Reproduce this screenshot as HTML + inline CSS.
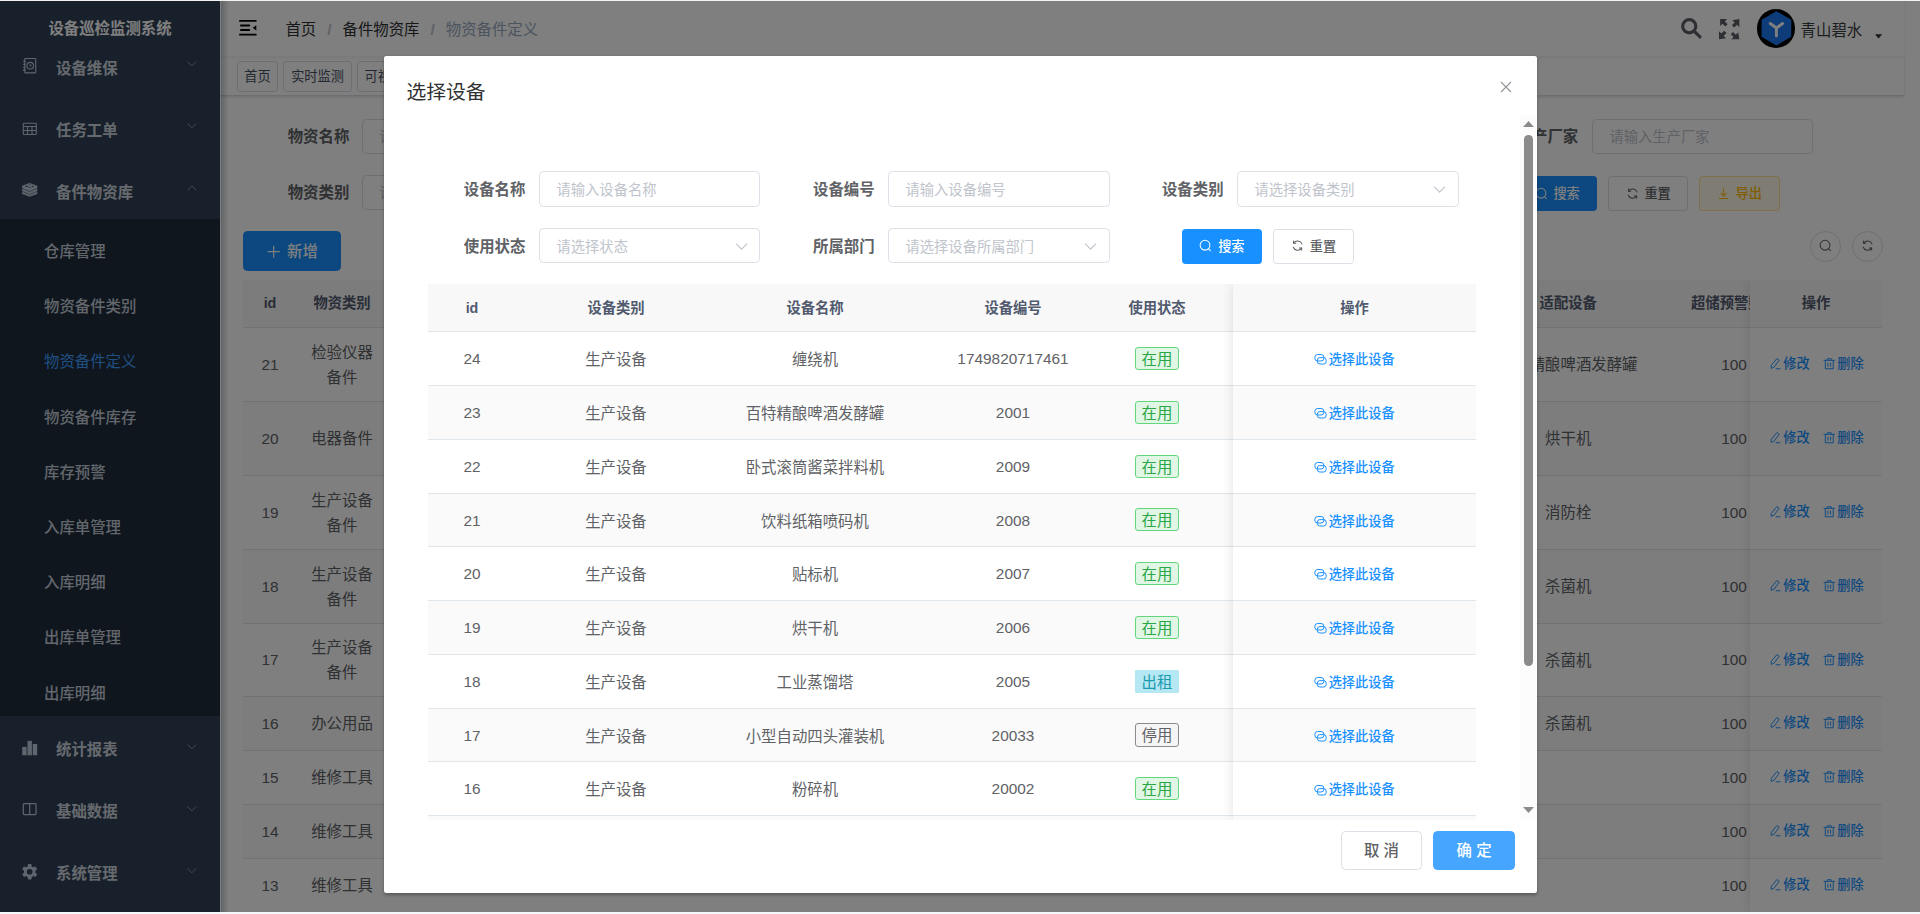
<!DOCTYPE html>
<html lang="zh-CN">
<head>
<meta charset="utf-8">
<title>设备巡检监测系统</title>
<style>
html,body{margin:0;padding:0;width:1920px;height:914px;overflow:hidden;background:#fff;}
*{box-sizing:border-box;}
body{font-family:"Liberation Sans","Noto Sans CJK SC",sans-serif;font-size:14px;color:#606266;-webkit-font-smoothing:antialiased;}
#w{position:absolute;left:0;top:1px;width:1920px;height:913px;overflow:hidden;}
#z{zoom:1.1;position:absolute;left:0;top:0;width:1745.46px;height:830px;overflow:hidden;background:#fff;}
svg{display:inline-block;vertical-align:middle;overflow:visible;}
/* sidebar */
.sidebar{position:absolute;left:0;top:0;width:200px;height:100%;background:#304156;z-index:5;overflow:hidden;}
.logo{position:absolute;left:0;top:0;width:200px;height:50px;line-height:50px;background:#304156;text-align:center;color:#fff;font-weight:700;font-size:14px;z-index:3;}
.menu{position:absolute;left:0;top:29px;width:200px;}
.mi{position:relative;height:56.36px;line-height:65.6px;color:#ccd3dc;font-size:14px;font-weight:700;padding-left:20px;white-space:nowrap;}
.mi .ic{display:inline-block;width:14px;height:14px;margin-right:17px;vertical-align:-1px;color:#bfcbd9;position:relative;top:-1.2px;}
.mi .ic svg{width:14px;height:14px;display:block;}
.mi .arr{position:absolute;right:21px;top:25.6px;width:8.8px;height:5.3px;}
.mi .arr svg{width:8.8px;height:5.3px;display:block;}
.mi.lo{top:-1.6px;}
.mi.lo .arr{top:27.1px;}
.sub{background:#1f2d3d;}
.si{height:50.2px;line-height:59.9px;padding-left:40px;color:#c6ced8;font-size:14px;font-weight:500;white-space:nowrap;overflow:hidden;}
.si.act{color:#409eff;font-weight:400;}
.sshadow{position:absolute;left:200.9px;top:0;width:7.3px;height:100%;background:linear-gradient(to right,rgba(0,21,41,.24),rgba(0,21,41,.13) 40%,rgba(0,21,41,0));z-index:6;}
/* main */
.main{position:absolute;left:200px;top:0;width:1530.9px;height:100%;background:#fff;}
.navbar{position:relative;z-index:2;height:50px;background:#fff;box-shadow:0 1px 4px rgba(0,21,41,.08);}
.hamb{position:absolute;left:17.330px;top:17.450px;width:16.100px;height:14.200px;}
.bc{position:absolute;left:59.5px;top:0;line-height:53px;font-size:14px;color:#303133;white-space:nowrap;}
.bc .sep{margin:0 10px;color:#c0c4cc;font-weight:700;}
.bc .last{color:#97a8be;}
.nr{position:absolute;right:0;top:0;height:50px;}
.tags{position:relative;height:36.5px;background:#fff;border-bottom:1px solid #d8dce5;box-shadow:0 1px 3px 0 rgba(0,0,0,.12),0 0 3px 0 rgba(0,0,0,.04);white-space:nowrap;overflow:hidden;}
.tag{display:inline-block;height:27.5px;line-height:27.4px;border:1px solid #d8dce5;color:#495060;background:#fff;padding:0 6.1px;font-size:12px;margin-left:4.7px;margin-top:4.8px;border-radius:3px;vertical-align:top;}
.tag:first-child{margin-left:15px;}

.i{width:1em;height:1em;vertical-align:-0.125em;}
.am{position:absolute;left:0;top:0;width:100%;height:100%;}
.abs{position:absolute;white-space:nowrap;}
.lbl{position:absolute;font-weight:700;font-size:14px;color:#606266;white-space:nowrap;line-height:35.2px;height:32px;}
.inp{position:absolute;height:32px;border:1px solid #dcdfe6;border-radius:4px;background:#fff;color:#c0c4cc;font-size:13px;line-height:33.6px;padding:0 15px;white-space:nowrap;overflow:hidden;}
.inp .sarr{position:absolute;right:10.500px;top:12px;width:12px;height:8px;}
.btn{position:absolute;border-radius:3px;border:1px solid #dcdfe6;background:#fff;color:#606266;font-size:12px;font-weight:500;text-align:center;white-space:nowrap;}
.up{line-height:33.4px !important;}
.inp.up{line-height:31.8px !important;}
.btn.pri{background:#1890ff;border-color:#1890ff;color:#fff;}
.btn.warn{background:#fff8e6;border-color:#ffdf99;color:#ffba00;}
.btn .i{margin-right:5px;}
.circ{position:absolute;width:28px;height:28px;border-radius:50%;border:1px solid #dcdfe6;background:#fff;color:#606266;font-size:12px;text-align:center;line-height:26px;}
.circ .i{vertical-align:-0.150em}
.tb{position:absolute;overflow:hidden;font-size:14px;color:#606266;}
.tr{position:absolute;left:0;width:100%;border-bottom:1px solid #dfe6ec;background:#fff;}
.tr.s{background:#fafafa;}
.tr.h{background:#f8f8f9;color:#515a6e;font-weight:700;font-size:13px;}
.cc{position:absolute;top:0;height:100%;display:flex;align-items:center;justify-content:center;text-align:center;line-height:23px;white-space:nowrap;transform:translateX(-50%);padding-top:2.4px;}
.fxc{position:absolute;top:0;height:100%;box-shadow:0 0 10px rgba(0,0,0,.12);}
.fxc .tr{left:0;width:100%;}
.lk{color:#1890ff;font-size:12px;font-weight:500;}
.bg .cc{padding-top:0.8px;}
.cc.tg{padding-top:0;}
.cc.n{padding-top:0.6px;}
.bg .cc.n{padding-top:0;}
.bg .cc.lk{padding-top:0;padding-bottom:1.4px;}
.lk .i{margin-right:1px;vertical-align:-0.04em;}
.mask{position:absolute;left:0;top:0;width:100%;height:100%;background:rgba(0,0,0,.5);z-index:10;}
.dlg{position:absolute;background:#fff;border-radius:2px;box-shadow:0 1px 3px rgba(0,0,0,.3);z-index:11;}
.dt{position:absolute;font-size:18px;color:#303133;line-height:24px;white-space:nowrap;}
.etag{display:inline-block;height:21px;line-height:21.6px;padding:0 5.1px;font-size:14px;border-radius:2.7px;border:1px solid;}
.etag.ok{background:#e1f6e4;border-color:#62d67d;color:#2aa748;}
.etag.info{background:#b5e8f3;border-color:#b5e8f3;color:#1a9bb0;border-radius:1px;}
.etag.stop{background:#f5f5f5;border-color:#8a8a8a;color:#606266;}
</style>
</head>
<body>
<div id="w"><div id="z">
<div class="sidebar">
  <div class="logo">设备巡检监测系统</div>
  <div class="menu">
    <div class="mi"><span class="ic"><svg viewBox="0 0 14 14" fill="none" stroke="currentColor" stroke-width="1"><rect x="2.5" y="0.5" width="10" height="13" rx="0.5"/><circle cx="7.500" cy="7" r="3"/><path d="M7.5 5.6V7h1.2M0.8 3h2.4M0.8 5.7h2.4M0.8 8.4h2.4M0.8 11h2.4"/></svg></span>设备维保<span class="arr"><svg viewBox="0 0 10 6" fill="none" stroke="#8c95a1" stroke-width="1"><path d="M0.5 0.5L5 5l4.5-4.5"/></svg></span></div>
    <div class="mi"><span class="ic" style="top:-0.700px"><svg viewBox="0 0 14 14" fill="none" stroke="currentColor" stroke-width="1"><rect x="1.200" y="2.100" width="11.800" height="10.200" rx="0.600"/><path d="M1.200 5h11.800M1.200 8.700h11.800M5.100 5v7.300M9.100 5v7.300"/></svg></span>任务工单<span class="arr"><svg viewBox="0 0 10 6" fill="none" stroke="#8c95a1" stroke-width="1"><path d="M0.5 0.5L5 5l4.5-4.5"/></svg></span></div>
    <div class="mi"><span class="ic" style="top:-1px"><svg viewBox="0 0 14 14" fill="currentColor" stroke="currentColor" stroke-width="0.500" stroke-linejoin="round"><path d="M7 1.100l6.700 2.600v1.700L7 8.300 0.300 5.400V3.700z"/><path d="M0.300 6.300L7 9.200l6.700-2.900v1.800L7 10.900 0.300 8.100z"/><path d="M0.300 9L7 11.800 13.700 9v1.700L7 13.100 0.300 10.700z"/><g fill="#304156" stroke="none"><ellipse cx="4.300" cy="3.900" rx="1.300" ry="0.550"/><ellipse cx="7.100" cy="2.600" rx="0.900" ry="0.400"/><ellipse cx="9.800" cy="3.800" rx="1.100" ry="0.500"/><ellipse cx="7" cy="5.100" rx="1.100" ry="0.450"/></g></svg></span>备件物资库<span class="arr"><svg viewBox="0 0 10 6" fill="none" stroke="#8c95a1" stroke-width="1"><path d="M0.5 5.500L5 1l4.500 4.500"/></svg></span></div>
    <div class="sub">
      <div class="si">仓库管理</div>
      <div class="si">物资备件类别</div>
      <div class="si act">物资备件定义</div>
      <div class="si">物资备件库存</div>
      <div class="si">库存预警</div>
      <div class="si">入库单管理</div>
      <div class="si">入库明细</div>
      <div class="si">出库单管理</div>
      <div class="si">出库明细</div>
    </div>
    <div class="mi lo"><span class="ic" style="top:-0.800px"><svg viewBox="0 0 14 14" fill="currentColor" stroke="none"><rect x="0.200" y="6.300" width="4" height="7.600"/><rect x="5" y="0.800" width="4" height="13.100"/><rect x="9.800" y="3.600" width="4" height="10.300"/></svg></span>统计报表<span class="arr"><svg viewBox="0 0 10 6" fill="none" stroke="#8c95a1" stroke-width="1"><path d="M0.5 0.5L5 5l4.5-4.5"/></svg></span></div>
    <div class="mi lo"><span class="ic" style="top:-1.300px"><svg viewBox="0 0 14 14" fill="none" stroke="currentColor" stroke-width="1.100"><rect x="1.200" y="2.300" width="11.600" height="10" rx="1"/><path d="M7 2.300v10"/></svg></span>基础数据<span class="arr"><svg viewBox="0 0 10 6" fill="none" stroke="#8c95a1" stroke-width="1"><path d="M0.5 0.5L5 5l4.5-4.5"/></svg></span></div>
    <div class="mi lo"><span class="ic" style="top:-0.500px"><svg viewBox="0 0 14 14"><g transform="translate(7 7)" fill="currentColor"><rect x="-1.700" y="-7" width="3.400" height="2.800" rx="0.800" transform="rotate(0)"/><rect x="-1.700" y="-7" width="3.400" height="2.800" rx="0.800" transform="rotate(60)"/><rect x="-1.700" y="-7" width="3.400" height="2.800" rx="0.800" transform="rotate(120)"/><rect x="-1.700" y="-7" width="3.400" height="2.800" rx="0.800" transform="rotate(180)"/><rect x="-1.700" y="-7" width="3.400" height="2.800" rx="0.800" transform="rotate(240)"/><rect x="-1.700" y="-7" width="3.400" height="2.800" rx="0.800" transform="rotate(300)"/></g><circle cx="7" cy="7" r="3.900" fill="none" stroke="currentColor" stroke-width="2.700"/></svg></span>系统管理<span class="arr"><svg viewBox="0 0 10 6" fill="none" stroke="#8c95a1" stroke-width="1"><path d="M0.5 0.5L5 5l4.5-4.5"/></svg></span></div>
  </div>
</div>

<div class="main">
  <div class="navbar">
    <svg class="hamb" viewBox="0 0 17.700 15.600" fill="#000"><rect x="0" y="0" width="17.700" height="1.800" rx="0.900"/><rect x="1" y="4.600" width="10.200" height="1.800" rx="0.900"/><rect x="1" y="9.100" width="10.200" height="1.800" rx="0.900"/><rect x="0" y="13.800" width="17.700" height="1.800" rx="0.900"/><path d="M17.300 5.300v5.100l-3.600-2.550z"/></svg>
    <div class="bc"><span>首页</span><span class="sep">/</span><span>备件物资库</span><span class="sep">/</span><span class="last">物资备件定义</span></div>
    <div class="nr">
      <svg style="position:absolute;right:184.500px;top:15.500px;width:18.500px;height:18.500px" viewBox="0 0 18 18" fill="none" stroke="#5a5e66" stroke-width="2.800"><circle cx="7.300" cy="7.300" r="5.800"/><path d="M11.600 11.600l5.200 5.200" stroke-linecap="round"/></svg>
      <svg style="position:absolute;right:149.300px;top:16.300px;width:18.500px;height:18.500px" viewBox="0 0 18 18" fill="#5a5e66"><path d="M0 0h7.200L5.100 2.100l2.500 2.500-2 2-2.500-2.500L1 6.200V0zM18 0v7.200l-2.100-2.100-2.500 2.500-2-2 2.500-2.500L11.800 1zM0 18v-7.200l2.100 2.100 2.500-2.500 2 2-2.500 2.500L6.200 17zM18 18h-7.200l2.100-2.100-2.500-2.500 2-2 2.500 2.500 2.100-2.100z"/></svg>
      <div style="position:absolute;right:98.800px;top:7.500px;width:35px;height:35px;border-radius:50%;background:#000;">
        <svg style="position:absolute;left:3.500px;top:1.800px;width:28px;height:31.500px" viewBox="0 0 26 29"><path d="M13 0l12.500 7.200v14.500L13 29 .5 21.700V7.200z" fill="#1a78f0"/><path d="M7.800 10.400L13 14.200l5.200-3.800M13 14.200v6.800" fill="none" stroke="#fff" stroke-width="2.500" stroke-linecap="round"/></svg>
      </div>
      <div style="position:absolute;right:38px;top:0;line-height:55px;font-size:14px;color:#3a3c40;white-space:nowrap;">青山碧水</div>
      <svg style="position:absolute;right:20.300px;top:29.600px;width:6.500px;height:4.400px" viewBox="0 0 7 4" fill="#303133"><path d="M0 0h7L3.500 4z"/></svg>
    </div>
  </div>
  <div class="tags"><span class="tag">首页</span><span class="tag">实时监测</span><span class="tag">可视化大屏</span><span class="tag">设备台账</span></div>
<div class="am">
<div class="lbl up" style="left:61.55px;top:106.91px">物资名称</div>
<div class="inp up" style="left:128.82px;top:106.91px;width:200.91px">请输入物资名称</div>
<div class="lbl up" style="left:1178.73px;top:106.91px">生产厂家</div>
<div class="inp up" style="left:1247.27px;top:106.91px;width:201.36px">请输入生产厂家</div>
<div class="lbl up" style="left:61.55px;top:157.82px">物资类别</div>
<div class="inp up" style="left:128.82px;top:157.82px;width:200.91px">请选择物资类别<svg class="sarr" viewBox="0 0 12 8" fill="none" stroke="#c0c4cc" stroke-width="1"><path d="M1 1.500l5 5 5-5"/></svg></div>
<div class="btn pri" style="left:1179.09px;top:159.27px;width:73.18px;height:31.36px;line-height:30.27px"><svg class="i" viewBox="0 0 14 14" fill="none" stroke="currentColor" stroke-width="1.100"><circle cx="6.400" cy="6.600" r="5.200"/><path d="M10.200 10.400l1.900 1.900" stroke-linecap="round"/></svg>搜索</div>
<div class="btn" style="left:1261.82px;top:159.27px;width:73.18px;height:31.36px;line-height:30.27px"><svg class="i" viewBox="0 0 14 14" fill="none" stroke="currentColor" stroke-width="1.100" stroke-linecap="round"><path d="M11.600 5.200A4.900 4.900 0 0 0 2.900 4.300M2.400 8.800a4.900 4.900 0 0 0 8.700.900"/><path d="M2.700 2.200v2.300h2.300M11.300 11.800V9.500H9"/></svg>重置</div>
<div class="btn warn" style="left:1344.55px;top:159.27px;width:73.64px;height:31.36px;line-height:30.27px"><svg class="i" viewBox="0 0 14 14" fill="none" stroke="currentColor" stroke-width="1.100"><path d="M7 1.500v8M3.800 6.500L7 9.700l3.200-3.200M2 12.300h10"/></svg>导出</div>
<div class="btn pri" style="left:20.91px;top:209.09px;width:89.09px;height:36.64px;line-height:36.0px;font-size:14px;border-radius:4px"><svg class="i" viewBox="0 0 14 14" fill="none" stroke="currentColor" stroke-width="1.100"><path d="M7 1.500v11M1.500 7h11"/></svg>新增</div>
<div class="circ" style="left:1445.45px;top:209.09px"><svg class="i" viewBox="0 0 14 14" fill="none" stroke="currentColor" stroke-width="1.100"><circle cx="6.400" cy="6.600" r="5.200"/><path d="M10.200 10.400l1.900 1.900" stroke-linecap="round"/></svg></div>
<div class="circ" style="left:1483.64px;top:209.09px"><svg class="i" viewBox="0 0 14 14" fill="none" stroke="currentColor" stroke-width="1.100" stroke-linecap="round"><path d="M11.600 5.200A4.900 4.900 0 0 0 2.900 4.300M2.400 8.800a4.900 4.900 0 0 0 8.700.900"/><path d="M2.700 2.200v2.300h2.300M11.300 11.800V9.500H9"/></svg></div>
<div class="tb bg" style="left:20.91px;top:253.64px;width:1490.0px;height:576.36px">
<div class="tr h" style="top:0;height:43.64px"><div class="cc" style="left:24.55px">id</div><div class="cc" style="left:90.0px">物资类别</div><div class="cc" style="left:1204.73px">适配设备</div><div class="cc" style="left:1355.45px">超储预警数量</div></div>
<div class="tr" style="top:43.64px;height:67.27px"><div class="cc n" style="left:24.55px">21</div><div class="cc" style="left:90.0px">检验仪器<br>备件</div><div class="cc" style="left:1204.73px">百特精酿啤酒发酵罐</div><div class="cc n" style="left:1355.45px">100</div></div>
<div class="tr s" style="top:110.91px;height:67.27px"><div class="cc n" style="left:24.55px">20</div><div class="cc" style="left:90.0px">电器备件</div><div class="cc" style="left:1204.73px">烘干机</div><div class="cc n" style="left:1355.45px">100</div></div>
<div class="tr" style="top:178.18px;height:67.27px"><div class="cc n" style="left:24.55px">19</div><div class="cc" style="left:90.0px">生产设备<br>备件</div><div class="cc" style="left:1204.73px">消防栓</div><div class="cc n" style="left:1355.45px">100</div></div>
<div class="tr s" style="top:245.45px;height:67.27px"><div class="cc n" style="left:24.55px">18</div><div class="cc" style="left:90.0px">生产设备<br>备件</div><div class="cc" style="left:1204.73px">杀菌机</div><div class="cc n" style="left:1355.45px">100</div></div>
<div class="tr" style="top:312.73px;height:66.36px"><div class="cc n" style="left:24.55px">17</div><div class="cc" style="left:90.0px">生产设备<br>备件</div><div class="cc" style="left:1204.73px">杀菌机</div><div class="cc n" style="left:1355.45px">100</div></div>
<div class="tr s" style="top:379.09px;height:49.09px"><div class="cc n" style="left:24.55px">16</div><div class="cc" style="left:90.0px">办公用品</div><div class="cc" style="left:1204.73px">杀菌机</div><div class="cc n" style="left:1355.45px">100</div></div>
<div class="tr" style="top:428.18px;height:49.09px"><div class="cc n" style="left:24.55px">15</div><div class="cc" style="left:90.0px">维修工具</div><div class="cc" style="left:1204.73px"></div><div class="cc n" style="left:1355.45px">100</div></div>
<div class="tr s" style="top:477.27px;height:49.09px"><div class="cc n" style="left:24.55px">14</div><div class="cc" style="left:90.0px">维修工具</div><div class="cc" style="left:1204.73px"></div><div class="cc n" style="left:1355.45px">100</div></div>
<div class="tr" style="top:526.36px;height:49.09px"><div class="cc n" style="left:24.55px">13</div><div class="cc" style="left:90.0px">维修工具</div><div class="cc" style="left:1204.73px"></div><div class="cc n" style="left:1355.45px">100</div></div>
<div class="fxc" style="left:1370.0px;width:120.0px"><div class="tr h" style="top:0;height:43.64px"><div class="cc" style="left:50%">操作</div></div><div class="tr" style="top:43.64px;height:67.27px"><div class="cc lk" style="left:35.73px"><svg class="i" viewBox="0 0 14 14" fill="none" stroke="currentColor" stroke-width="1"><path d="M8.800 1.600l2.400 1.800-5.600 7.600-3 1 .200-3.100zM7.500 12.500h5"/></svg>修改</div><div class="cc lk" style="left:84.82px"><svg class="i" viewBox="0 0 14 14" fill="none" stroke="currentColor" stroke-width="1"><path d="M0.900 3.500h12.200M5 3.500V1.800h4v1.700M2.800 3.500v9h8.400v-9M5.600 6v4.200M8.400 6v4.200"/></svg>删除</div></div><div class="tr s" style="top:110.91px;height:67.27px"><div class="cc lk" style="left:35.73px"><svg class="i" viewBox="0 0 14 14" fill="none" stroke="currentColor" stroke-width="1"><path d="M8.800 1.600l2.400 1.800-5.600 7.600-3 1 .200-3.100zM7.500 12.500h5"/></svg>修改</div><div class="cc lk" style="left:84.82px"><svg class="i" viewBox="0 0 14 14" fill="none" stroke="currentColor" stroke-width="1"><path d="M0.900 3.500h12.200M5 3.500V1.800h4v1.700M2.800 3.500v9h8.400v-9M5.600 6v4.200M8.400 6v4.200"/></svg>删除</div></div><div class="tr" style="top:178.18px;height:67.27px"><div class="cc lk" style="left:35.73px"><svg class="i" viewBox="0 0 14 14" fill="none" stroke="currentColor" stroke-width="1"><path d="M8.800 1.600l2.400 1.800-5.600 7.600-3 1 .200-3.100zM7.500 12.500h5"/></svg>修改</div><div class="cc lk" style="left:84.82px"><svg class="i" viewBox="0 0 14 14" fill="none" stroke="currentColor" stroke-width="1"><path d="M0.900 3.500h12.200M5 3.500V1.800h4v1.700M2.800 3.500v9h8.400v-9M5.600 6v4.200M8.400 6v4.200"/></svg>删除</div></div><div class="tr s" style="top:245.45px;height:67.27px"><div class="cc lk" style="left:35.73px"><svg class="i" viewBox="0 0 14 14" fill="none" stroke="currentColor" stroke-width="1"><path d="M8.800 1.600l2.400 1.800-5.600 7.600-3 1 .200-3.100zM7.500 12.500h5"/></svg>修改</div><div class="cc lk" style="left:84.82px"><svg class="i" viewBox="0 0 14 14" fill="none" stroke="currentColor" stroke-width="1"><path d="M0.900 3.500h12.200M5 3.500V1.800h4v1.700M2.800 3.500v9h8.400v-9M5.600 6v4.200M8.400 6v4.200"/></svg>删除</div></div><div class="tr" style="top:312.73px;height:66.36px"><div class="cc lk" style="left:35.73px"><svg class="i" viewBox="0 0 14 14" fill="none" stroke="currentColor" stroke-width="1"><path d="M8.800 1.600l2.400 1.800-5.600 7.600-3 1 .200-3.100zM7.500 12.500h5"/></svg>修改</div><div class="cc lk" style="left:84.82px"><svg class="i" viewBox="0 0 14 14" fill="none" stroke="currentColor" stroke-width="1"><path d="M0.900 3.500h12.200M5 3.500V1.800h4v1.700M2.800 3.500v9h8.400v-9M5.600 6v4.200M8.400 6v4.200"/></svg>删除</div></div><div class="tr s" style="top:379.09px;height:49.09px"><div class="cc lk" style="left:35.73px"><svg class="i" viewBox="0 0 14 14" fill="none" stroke="currentColor" stroke-width="1"><path d="M8.800 1.600l2.400 1.800-5.600 7.600-3 1 .200-3.100zM7.500 12.500h5"/></svg>修改</div><div class="cc lk" style="left:84.82px"><svg class="i" viewBox="0 0 14 14" fill="none" stroke="currentColor" stroke-width="1"><path d="M0.900 3.500h12.200M5 3.500V1.800h4v1.700M2.800 3.500v9h8.400v-9M5.600 6v4.200M8.400 6v4.200"/></svg>删除</div></div><div class="tr" style="top:428.18px;height:49.09px"><div class="cc lk" style="left:35.73px"><svg class="i" viewBox="0 0 14 14" fill="none" stroke="currentColor" stroke-width="1"><path d="M8.800 1.600l2.400 1.800-5.600 7.600-3 1 .200-3.100zM7.500 12.500h5"/></svg>修改</div><div class="cc lk" style="left:84.82px"><svg class="i" viewBox="0 0 14 14" fill="none" stroke="currentColor" stroke-width="1"><path d="M0.900 3.500h12.200M5 3.500V1.800h4v1.700M2.800 3.500v9h8.400v-9M5.600 6v4.200M8.400 6v4.200"/></svg>删除</div></div><div class="tr s" style="top:477.27px;height:49.09px"><div class="cc lk" style="left:35.73px"><svg class="i" viewBox="0 0 14 14" fill="none" stroke="currentColor" stroke-width="1"><path d="M8.800 1.600l2.400 1.800-5.600 7.600-3 1 .200-3.100zM7.500 12.500h5"/></svg>修改</div><div class="cc lk" style="left:84.82px"><svg class="i" viewBox="0 0 14 14" fill="none" stroke="currentColor" stroke-width="1"><path d="M0.900 3.500h12.200M5 3.500V1.800h4v1.700M2.800 3.500v9h8.400v-9M5.600 6v4.200M8.400 6v4.200"/></svg>删除</div></div><div class="tr" style="top:526.36px;height:49.09px"><div class="cc lk" style="left:35.73px"><svg class="i" viewBox="0 0 14 14" fill="none" stroke="currentColor" stroke-width="1"><path d="M8.800 1.600l2.400 1.800-5.600 7.600-3 1 .200-3.100zM7.500 12.500h5"/></svg>修改</div><div class="cc lk" style="left:84.82px"><svg class="i" viewBox="0 0 14 14" fill="none" stroke="currentColor" stroke-width="1"><path d="M0.900 3.500h12.200M5 3.500V1.800h4v1.700M2.800 3.500v9h8.400v-9M5.600 6v4.200M8.400 6v4.200"/></svg>删除</div></div></div>
</div>
</div>
</div>

<div class="sshadow"></div>

<div class="mask"></div>
<div class="dlg" style="left:349.09px;top:50.23px;width:1048.18px;height:760.36px">
<div class="dt" style="left:20.45px;top:20.95px">选择设备</div>
<div class="abs" style="left:1014.55px;top:22.5px;width:10.91px;height:10.91px;line-height:0"><svg viewBox="0 0 12 12" fill="none" stroke="#909399" stroke-width="1.100"><path d="M1 1l10 10M11 1L1 11"/></svg></div>
<div class="abs" style="left:1032.73px;top:53.41px;width:14.55px;height:640.91px;background:#fcfcfc"></div>
<svg class="abs" style="left:1035.45px;top:58.86px;width:10.0px;height:5.45px" viewBox="0 0 11 6"><path d="M0 6L5.500 0 11 6z" fill="#8b8b8b"/></svg>
<svg class="abs" style="left:1035.45px;top:682.5px;width:10.0px;height:5.45px" viewBox="0 0 11 6"><path d="M0 0L5.500 6 11 0z" fill="#8b8b8b"/></svg>
<div class="abs" style="left:1036.45px;top:71.41px;width:8.0px;height:482.82px;background:#8b8b8b;border-radius:4.0px"></div>
<div class="lbl" style="left:72.55px;top:104.41px">设备名称</div>
<div class="inp" style="left:140.91px;top:104.41px;height:32.73px;width:201.36px">请输入设备名称</div>
<div class="lbl" style="left:390.0px;top:104.41px">设备编号</div>
<div class="inp" style="left:458.18px;top:104.41px;height:32.73px;width:201.82px">请输入设备编号</div>
<div class="lbl" style="left:707.27px;top:104.41px">设备类别</div>
<div class="inp" style="left:775.45px;top:104.41px;height:32.73px;width:201.82px">请选择设备类别<svg class="sarr" viewBox="0 0 12 8" fill="none" stroke="#c0c4cc" stroke-width="1"><path d="M1 1.500l5 5 5-5"/></svg></div>
<div class="lbl" style="left:72.55px;top:156.23px">使用状态</div>
<div class="inp" style="left:140.91px;top:156.23px;width:201.36px">请选择状态<svg class="sarr" viewBox="0 0 12 8" fill="none" stroke="#c0c4cc" stroke-width="1"><path d="M1 1.500l5 5 5-5"/></svg></div>
<div class="lbl" style="left:390.0px;top:156.23px">所属部门</div>
<div class="inp" style="left:458.18px;top:156.23px;width:201.82px">请选择设备所属部门<svg class="sarr" viewBox="0 0 12 8" fill="none" stroke="#c0c4cc" stroke-width="1"><path d="M1 1.500l5 5 5-5"/></svg></div>
<div class="btn pri" style="left:725.45px;top:157.05px;width:72.73px;height:31.82px;line-height:30.91px"><svg class="i" viewBox="0 0 14 14" fill="none" stroke="currentColor" stroke-width="1.100"><circle cx="6.400" cy="6.600" r="5.200"/><path d="M10.200 10.400l1.900 1.900" stroke-linecap="round"/></svg>搜索</div>
<div class="btn" style="left:808.18px;top:157.05px;width:73.91px;height:31.82px;line-height:30.91px"><svg class="i" viewBox="0 0 14 14" fill="none" stroke="currentColor" stroke-width="1.100" stroke-linecap="round"><path d="M11.600 5.200A4.900 4.900 0 0 0 2.900 4.300M2.400 8.800a4.900 4.900 0 0 0 8.700.900"/><path d="M2.700 2.200v2.300h2.300M11.300 11.800V9.500H9"/></svg>重置</div>
<div class="tb" style="left:40.0px;top:206.86px;width:952.73px;height:487.45px">
<div class="tr h" style="top:0;height:44.0px"><div class="cc" style="left:40.0px">id</div><div class="cc" style="left:170.91px">设备类别</div><div class="cc" style="left:351.82px">设备名称</div><div class="cc" style="left:531.82px">设备编号</div><div class="cc" style="left:662.73px">使用状态</div></div>
<div class="tr" style="top:44.0px;height:48.89px"><div class="cc n" style="left:40.0px">24</div><div class="cc" style="left:170.91px">生产设备</div><div class="cc" style="left:351.82px">缠绕机</div><div class="cc n" style="left:531.82px">1749820717461</div><div class="cc tg" style="left:662.73px"><span class="etag ok">在用</span></div></div>
<div class="tr s" style="top:92.89px;height:48.89px"><div class="cc n" style="left:40.0px">23</div><div class="cc" style="left:170.91px">生产设备</div><div class="cc" style="left:351.82px">百特精酿啤酒发酵罐</div><div class="cc n" style="left:531.82px">2001</div><div class="cc tg" style="left:662.73px"><span class="etag ok">在用</span></div></div>
<div class="tr" style="top:141.78px;height:48.89px"><div class="cc n" style="left:40.0px">22</div><div class="cc" style="left:170.91px">生产设备</div><div class="cc" style="left:351.82px">卧式滚筒酱菜拌料机</div><div class="cc n" style="left:531.82px">2009</div><div class="cc tg" style="left:662.73px"><span class="etag ok">在用</span></div></div>
<div class="tr s" style="top:190.67px;height:48.89px"><div class="cc n" style="left:40.0px">21</div><div class="cc" style="left:170.91px">生产设备</div><div class="cc" style="left:351.82px">饮料纸箱喷码机</div><div class="cc n" style="left:531.82px">2008</div><div class="cc tg" style="left:662.73px"><span class="etag ok">在用</span></div></div>
<div class="tr" style="top:239.56px;height:48.89px"><div class="cc n" style="left:40.0px">20</div><div class="cc" style="left:170.91px">生产设备</div><div class="cc" style="left:351.82px">贴标机</div><div class="cc n" style="left:531.82px">2007</div><div class="cc tg" style="left:662.73px"><span class="etag ok">在用</span></div></div>
<div class="tr s" style="top:288.45px;height:48.89px"><div class="cc n" style="left:40.0px">19</div><div class="cc" style="left:170.91px">生产设备</div><div class="cc" style="left:351.82px">烘干机</div><div class="cc n" style="left:531.82px">2006</div><div class="cc tg" style="left:662.73px"><span class="etag ok">在用</span></div></div>
<div class="tr" style="top:337.35px;height:48.89px"><div class="cc n" style="left:40.0px">18</div><div class="cc" style="left:170.91px">生产设备</div><div class="cc" style="left:351.82px">工业蒸馏塔</div><div class="cc n" style="left:531.82px">2005</div><div class="cc tg" style="left:662.73px"><span class="etag info">出租</span></div></div>
<div class="tr s" style="top:386.24px;height:48.89px"><div class="cc n" style="left:40.0px">17</div><div class="cc" style="left:170.91px">生产设备</div><div class="cc" style="left:351.82px">小型自动四头灌装机</div><div class="cc n" style="left:531.82px">20033</div><div class="cc tg" style="left:662.73px"><span class="etag stop">停用</span></div></div>
<div class="tr" style="top:435.13px;height:48.89px"><div class="cc n" style="left:40.0px">16</div><div class="cc" style="left:170.91px">生产设备</div><div class="cc" style="left:351.82px">粉碎机</div><div class="cc n" style="left:531.82px">20002</div><div class="cc tg" style="left:662.73px"><span class="etag ok">在用</span></div></div>
<div class="tr s" style="top:484.02px;height:48.89px"><div class="cc n" style="left:40.0px">15</div><div class="cc" style="left:170.91px">生产设备</div><div class="cc" style="left:351.82px">封口机</div><div class="cc n" style="left:531.82px">20001</div><div class="cc tg" style="left:662.73px"><span class="etag ok">在用</span></div></div>
<div class="fxc" style="left:731.82px;width:220.91px"><div class="tr h" style="top:0;height:44.0px"><div class="cc" style="left:50%">操作</div></div><div class="tr" style="top:44.0px;height:48.89px"><div class="cc lk" style="left:50%"><svg class="i" viewBox="0 0 14 14" fill="none" stroke="currentColor" stroke-width="1.050"><rect x="1" y="1.600" width="9.600" height="6.900" rx="3"/><rect x="3.700" y="4.900" width="9.300" height="6.800" rx="2.600"/></svg>选择此设备</div></div><div class="tr s" style="top:92.89px;height:48.89px"><div class="cc lk" style="left:50%"><svg class="i" viewBox="0 0 14 14" fill="none" stroke="currentColor" stroke-width="1.050"><rect x="1" y="1.600" width="9.600" height="6.900" rx="3"/><rect x="3.700" y="4.900" width="9.300" height="6.800" rx="2.600"/></svg>选择此设备</div></div><div class="tr" style="top:141.78px;height:48.89px"><div class="cc lk" style="left:50%"><svg class="i" viewBox="0 0 14 14" fill="none" stroke="currentColor" stroke-width="1.050"><rect x="1" y="1.600" width="9.600" height="6.900" rx="3"/><rect x="3.700" y="4.900" width="9.300" height="6.800" rx="2.600"/></svg>选择此设备</div></div><div class="tr s" style="top:190.67px;height:48.89px"><div class="cc lk" style="left:50%"><svg class="i" viewBox="0 0 14 14" fill="none" stroke="currentColor" stroke-width="1.050"><rect x="1" y="1.600" width="9.600" height="6.900" rx="3"/><rect x="3.700" y="4.900" width="9.300" height="6.800" rx="2.600"/></svg>选择此设备</div></div><div class="tr" style="top:239.56px;height:48.89px"><div class="cc lk" style="left:50%"><svg class="i" viewBox="0 0 14 14" fill="none" stroke="currentColor" stroke-width="1.050"><rect x="1" y="1.600" width="9.600" height="6.900" rx="3"/><rect x="3.700" y="4.900" width="9.300" height="6.800" rx="2.600"/></svg>选择此设备</div></div><div class="tr s" style="top:288.45px;height:48.89px"><div class="cc lk" style="left:50%"><svg class="i" viewBox="0 0 14 14" fill="none" stroke="currentColor" stroke-width="1.050"><rect x="1" y="1.600" width="9.600" height="6.900" rx="3"/><rect x="3.700" y="4.900" width="9.300" height="6.800" rx="2.600"/></svg>选择此设备</div></div><div class="tr" style="top:337.35px;height:48.89px"><div class="cc lk" style="left:50%"><svg class="i" viewBox="0 0 14 14" fill="none" stroke="currentColor" stroke-width="1.050"><rect x="1" y="1.600" width="9.600" height="6.900" rx="3"/><rect x="3.700" y="4.900" width="9.300" height="6.800" rx="2.600"/></svg>选择此设备</div></div><div class="tr s" style="top:386.24px;height:48.89px"><div class="cc lk" style="left:50%"><svg class="i" viewBox="0 0 14 14" fill="none" stroke="currentColor" stroke-width="1.050"><rect x="1" y="1.600" width="9.600" height="6.900" rx="3"/><rect x="3.700" y="4.900" width="9.300" height="6.800" rx="2.600"/></svg>选择此设备</div></div><div class="tr" style="top:435.13px;height:48.89px"><div class="cc lk" style="left:50%"><svg class="i" viewBox="0 0 14 14" fill="none" stroke="currentColor" stroke-width="1.050"><rect x="1" y="1.600" width="9.600" height="6.900" rx="3"/><rect x="3.700" y="4.900" width="9.300" height="6.800" rx="2.600"/></svg>选择此设备</div></div><div class="tr s" style="top:484.02px;height:48.89px"><div class="cc lk" style="left:50%"><svg class="i" viewBox="0 0 14 14" fill="none" stroke="currentColor" stroke-width="1.050"><rect x="1" y="1.600" width="9.600" height="6.900" rx="3"/><rect x="3.700" y="4.900" width="9.300" height="6.800" rx="2.600"/></svg>选择此设备</div></div></div>
</div>
<div class="btn" style="left:870.27px;top:704.32px;width:73.09px;height:35.27px;line-height:34.73px;font-size:14px;border-radius:4px">取 消</div>
<div class="btn pri" style="left:953.82px;top:704.32px;width:74.36px;height:35.27px;line-height:34.73px;font-size:14px;border-radius:4px;background:#46a6ff;border-color:#46a6ff">确 定</div>
</div>
</div></div>
<div style="position:absolute;left:0;top:0;width:1920px;height:1px;background:#f2f2f2;z-index:99"></div>
<div style="position:absolute;left:0;top:912px;width:1920px;height:2px;background:#f4f8fb;z-index:99"></div>
</body>
</html>
